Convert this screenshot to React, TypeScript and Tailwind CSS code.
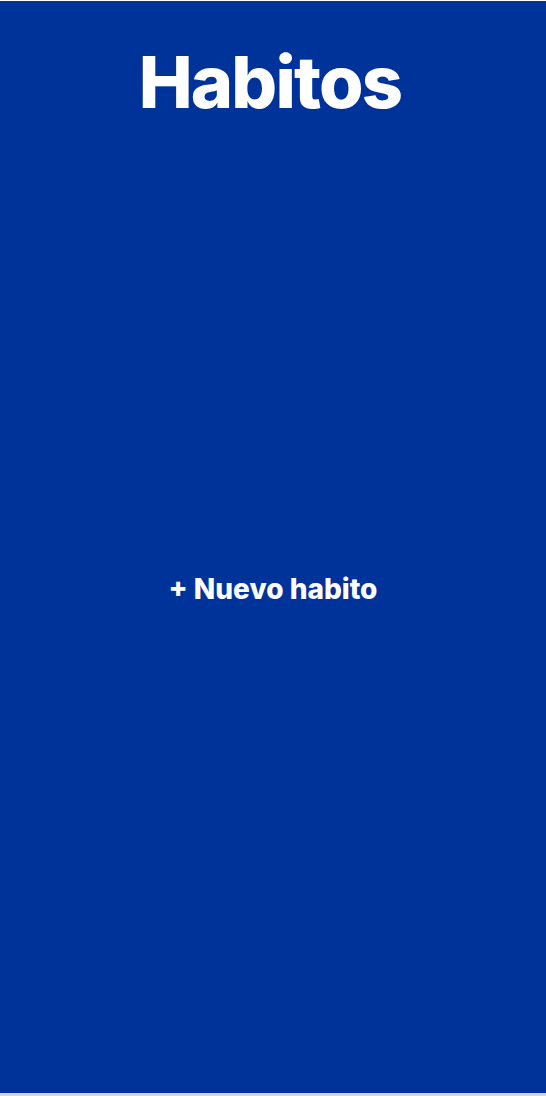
import React from "react";

const App: React.FC = () => {
  return (
    <div className="h-[1096px] w-full bg-[#d6d6d6] font-['Inter',sans-serif]">
      <div className="flex h-[1093px] flex-col items-center border-t border-white bg-[#003399] text-white">
        <h1 className="mt-[45px] mr-[6px] text-[72px] font-extrabold leading-none tracking-tight">
          Habitos
        </h1>
        <button className="mt-[457px] text-[28px] font-extrabold leading-none">
          + Nuevo habito
        </button>
      </div>
    </div>
  );
};

export default App;
